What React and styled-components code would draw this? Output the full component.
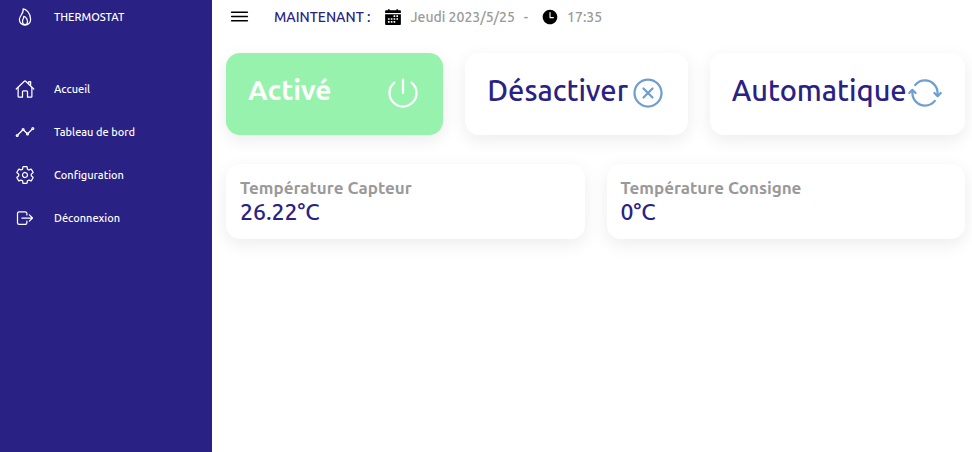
import React from "react";
import styled, { createGlobalStyle } from "styled-components";
import {
  IoAnalyticsOutline,
  IoCalendarSharp,
  IoCloseCircleOutline,
  IoFlameOutline,
  IoHomeOutline,
  IoLogOutOutline,
  IoMenuOutline,
  IoPowerOutline,
  IoSettingsOutline,
  IoSyncOutline,
  IoTime,
} from "react-icons/io5";

const GlobalStyle = createGlobalStyle`
  *, *::before, *::after { box-sizing: border-box; margin: 0; padding: 0; }
  body { background: #fff; font-family: Ubuntu, "Noto Sans", sans-serif; }
  button { font: inherit; border: 0; background: none; cursor: pointer; }
`;

const Page = styled.div`
  display: flex;
  min-height: 100vh;
`;

const Sidebar = styled.nav`
  flex: 0 0 212px;
  background: #2a2185;
`;

const Brand = styled.a`
  display: flex;
  align-items: center;
  height: 33px;
  margin-bottom: 34px;
  color: #fff;
  font-size: 11px;
  font-weight: 500;
  text-decoration: none;
`;

const NavList = styled.ul`
  list-style: none;
`;

const NavLink = styled.a`
  display: flex;
  align-items: center;
  height: 43px;
  color: #fff;
  font-size: 11px;
  font-weight: 500;
  text-decoration: none;
`;

const NavIcon = styled.span`
  display: flex;
  justify-content: center;
  width: 50px;
  margin-right: 4px;
  font-size: 20px;
`;

const Main = styled.main`
  flex: 1;
  min-width: 0;
`;

const Topbar = styled.header`
  display: flex;
  align-items: center;
  height: 33px;
  padding-left: 16px;
  color: #999;
  font-size: 14px;
  font-weight: 500;
  white-space: nowrap;
`;

const MenuButton = styled.button`
  display: flex;
  margin-right: 23px;
  font-size: 23px;
  color: #000;
`;

const NowLabel = styled.span`
  margin-right: 14px;
  color: #2a2185;
`;

const Stamp = styled.time`
  display: flex;
  align-items: center;
  gap: 8px;

  svg {
    color: #000;
    font-size: 18px;
  }
`;

const Dash = styled.span`
  margin: 0 13px 0 9px;
`;

const Modes = styled.section`
  display: grid;
  grid-template-columns: 218fr 223fr 256fr;
  gap: 22px;
  padding: 20px 7px 29px 14px;
`;

const ModeButton = styled.button`
  display: flex;
  align-items: center;
  justify-content: space-between;
  height: 82px;
  padding: 0 22px 3px;
  border-radius: 14px;
  background: ${({ $active }) => ($active ? "#97f2ad" : "#fff")};
  box-shadow: 0 5px 18px rgba(0, 0, 0, 0.08);
  color: ${({ $active }) => ($active ? "#fff" : "#2a2185")};

  svg {
    flex: none;
    color: ${({ $active }) => ($active ? "#fff" : "#6f9fd0")};
    font-size: 36px;
  }
`;

const ModeName = styled.span`
  padding-bottom: 6px;
  font-size: ${({ $active }) => ($active ? 28 : 29)}px;
  font-weight: ${({ $active }) => ($active ? 600 : 500)};
`;

const Readings = styled.section`
  display: grid;
  grid-template-columns: 1fr 1fr;
  gap: 22px;
  padding: 0 7px 0 14px;
`;

const ReadingCard = styled.article`
  height: 75px;
  padding: 12px 14px;
  border-radius: 14px;
  background: #fff;
  box-shadow: 0 5px 18px rgba(0, 0, 0, 0.08);
`;

const ReadingName = styled.h2`
  color: #999;
  font-size: 17px;
  font-weight: 600;
  line-height: 24px;
`;

const ReadingValue = styled.p`
  color: #2a2185;
  font-size: 23px;
  font-weight: 500;
  line-height: 24px;
`;

const links = [
  { name: "Accueil", Icon: IoHomeOutline },
  { name: "Tableau de bord", Icon: IoAnalyticsOutline },
  { name: "Configuration", Icon: IoSettingsOutline },
  { name: "Déconnexion", Icon: IoLogOutOutline },
];

const modes = [
  { name: "Activé", Icon: IoPowerOutline, active: true },
  { name: "Désactiver", Icon: IoCloseCircleOutline, active: false },
  { name: "Automatique", Icon: IoSyncOutline, active: false },
];

const readings = [
  { name: "Température Capteur", value: "26.22°C" },
  { name: "Température Consigne", value: "0°C" },
];

export default function App() {
  return (
    <Page>
      <GlobalStyle />
      <Sidebar>
        <Brand href="#">
          <NavIcon><IoFlameOutline /></NavIcon>
          THERMOSTAT
        </Brand>
        <NavList>
          {links.map(({ name, Icon }) => (
            <li key={name}>
              <NavLink href="#">
                <NavIcon><Icon /></NavIcon>
                {name}
              </NavLink>
            </li>
          ))}
        </NavList>
      </Sidebar>
      <Main>
        <Topbar>
          <MenuButton type="button" aria-label="Menu"><IoMenuOutline /></MenuButton>
          <NowLabel>MAINTENANT :</NowLabel>
          <Stamp dateTime="2023-05-25"><IoCalendarSharp />Jeudi 2023/5/25</Stamp>
          <Dash>-</Dash>
          <Stamp dateTime="17:35"><IoTime />17:35</Stamp>
        </Topbar>
        <Modes>
          {modes.map(({ name, Icon, active }) => (
            <ModeButton key={name} type="button" $active={active} aria-pressed={active}>
              <ModeName $active={active}>{name}</ModeName>
              <Icon />
            </ModeButton>
          ))}
        </Modes>
        <Readings>
          {readings.map(({ name, value }) => (
            <ReadingCard key={name}>
              <ReadingName>{name}</ReadingName>
              <ReadingValue>{value}</ReadingValue>
            </ReadingCard>
          ))}
        </Readings>
      </Main>
    </Page>
  );
}
